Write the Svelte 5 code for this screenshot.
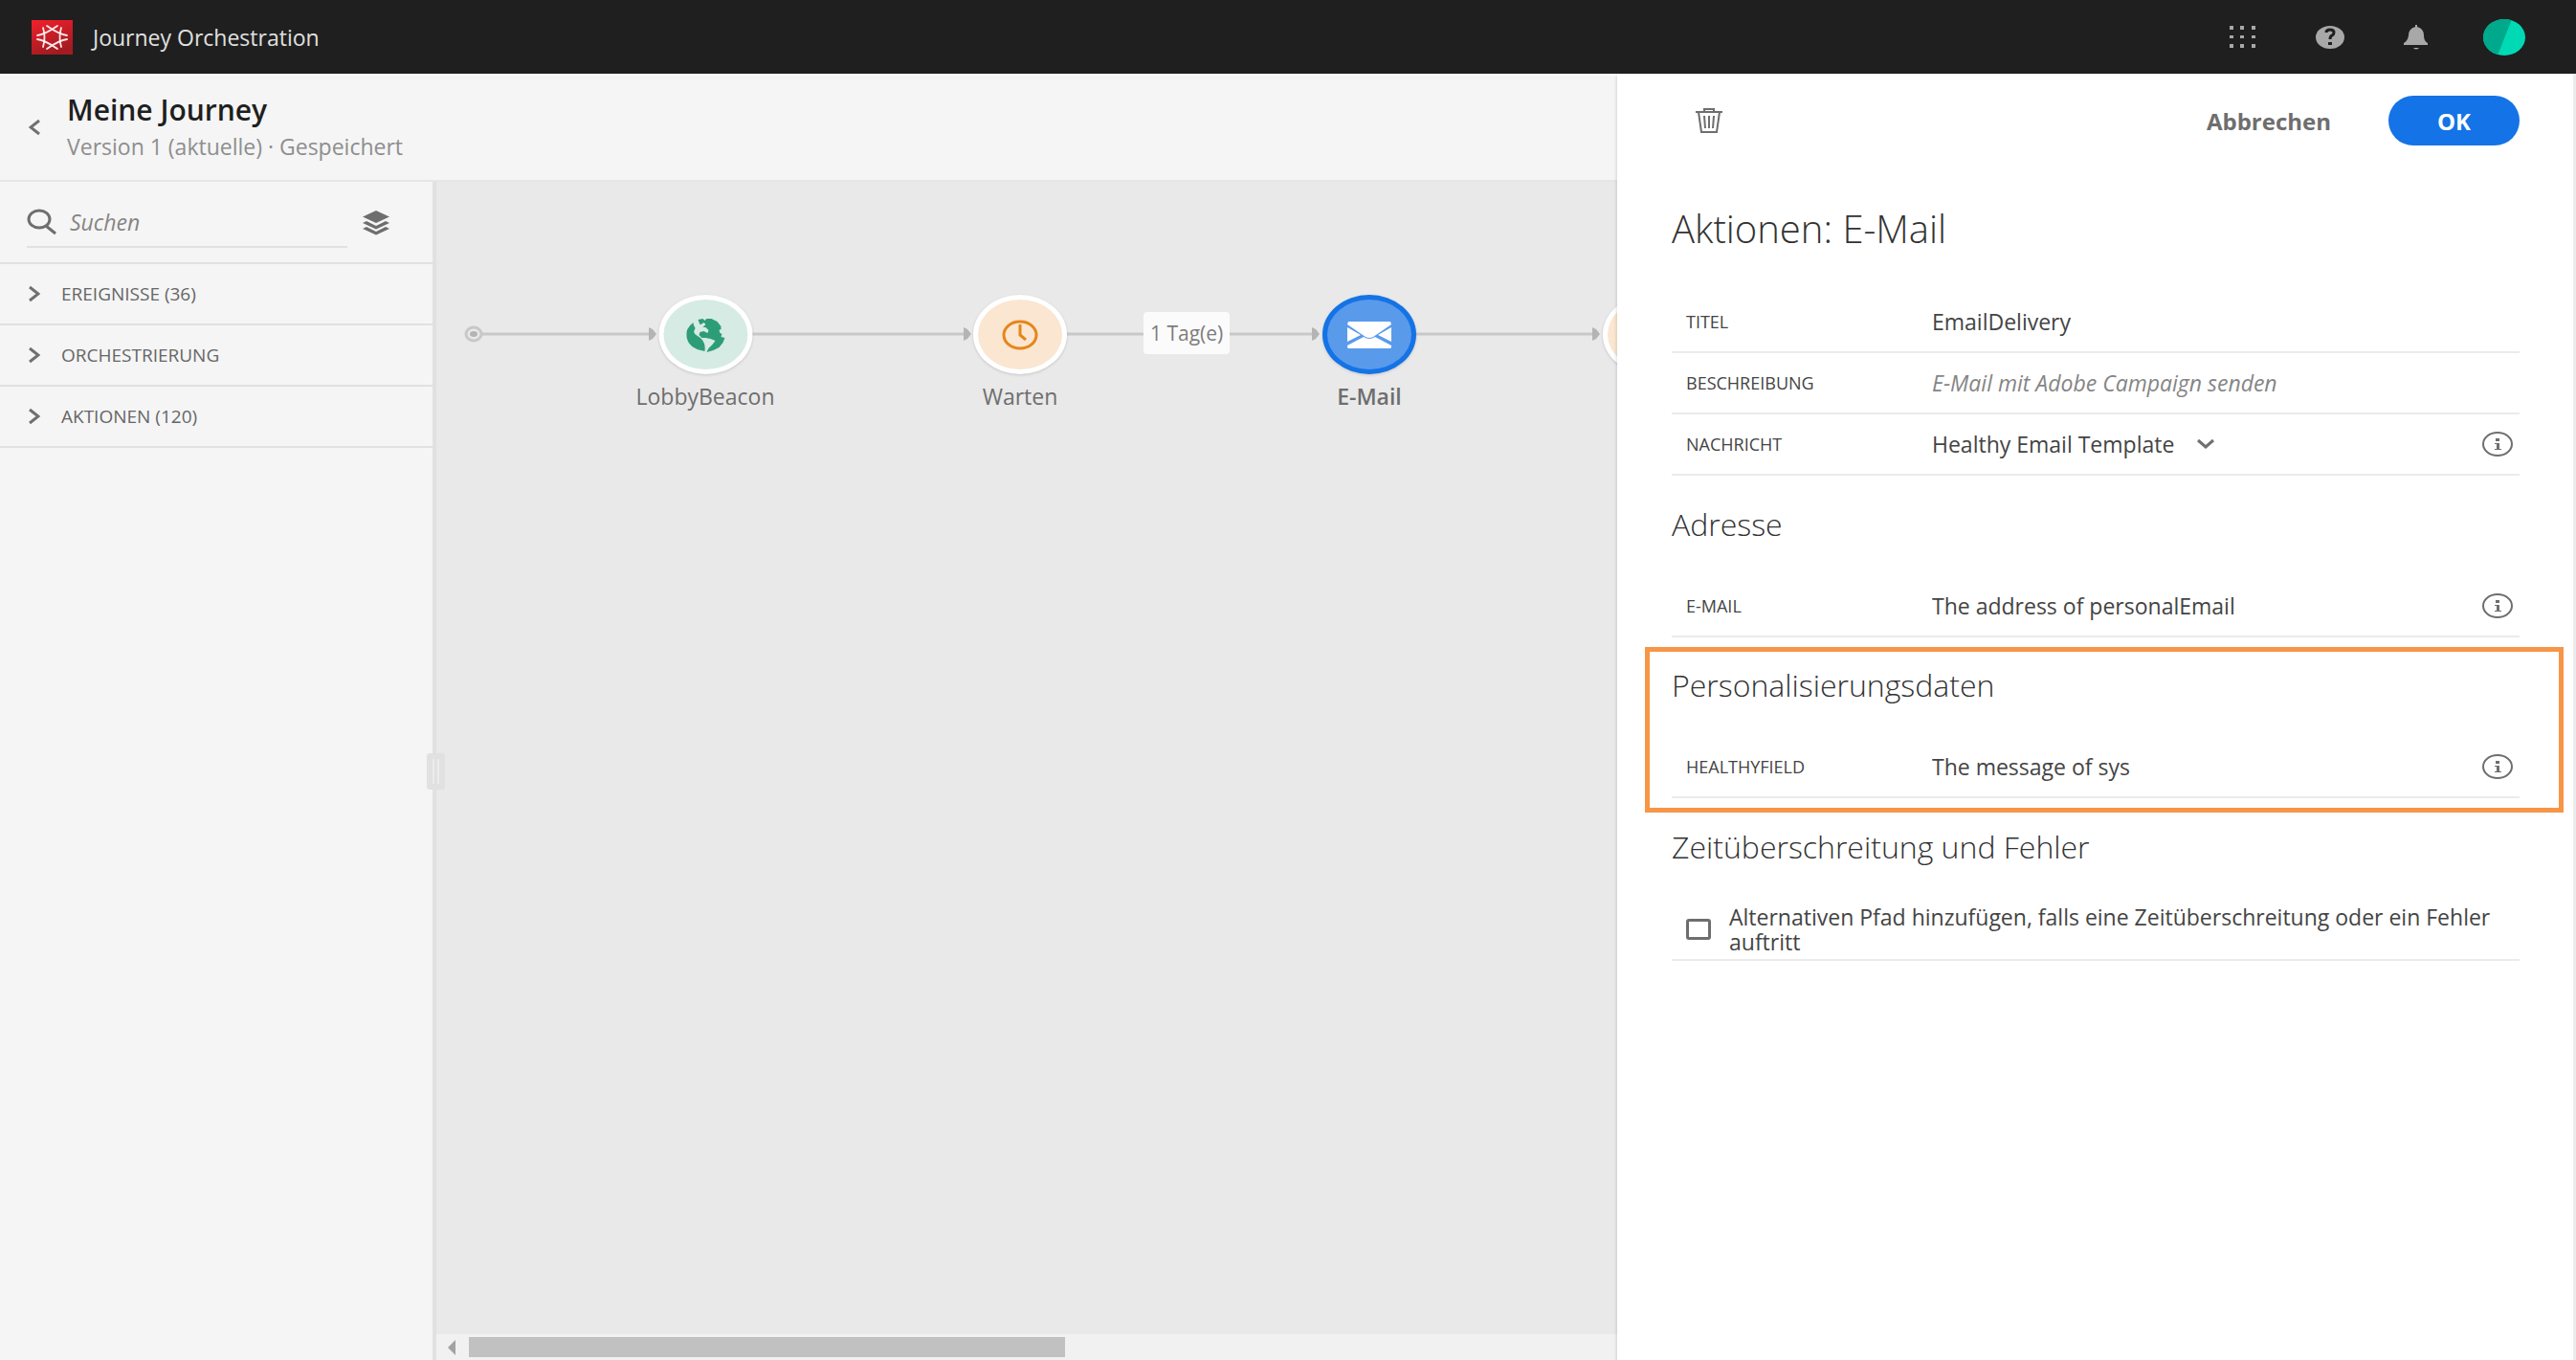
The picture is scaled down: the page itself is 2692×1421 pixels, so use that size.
<script lang="ts">
  interface Field {
    id: string
    label: string
    value?: string
    placeholder?: string
    options?: string[]
    info?: boolean
  }

  interface Section {
    title: string
    highlight?: boolean
    fields: Field[]
  }

  let searchValue: string = "";
  let alternativePath: boolean = false;

  const categories: string[] = ["EREIGNISSE (36)", "ORCHESTRIERUNG", "AKTIONEN (120)"];

  // positions on the journey canvas
  const nodes = [
    { x: 281, name: "LobbyBeacon", kind: "event" },
    { x: 610, name: "Warten", kind: "wait" },
    { x: 975, name: "E-Mail", kind: "action" },
    { x: 1268, name: "", kind: "wait" },
  ];

  const edges = [
    { from: 47, to: 230 },
    { from: 329, to: 559 },
    { from: 658, to: 923 },
    { from: 1023, to: 1216 },
  ];

  const general: Field[] = [
    { id: "title", label: "TITEL", value: "EmailDelivery" },
    { id: "description", label: "BESCHREIBUNG", value: "", placeholder: "E-Mail mit Adobe Campaign senden" },
    { id: "message", label: "NACHRICHT", options: ["Healthy Email Template"], info: true },
  ];

  const sections: Section[] = [
    {
      title: "Adresse",
      fields: [{ id: "email", label: "E-MAIL", value: "The address of personalEmail", info: true }],
    },
    {
      title: "Personalisierungsdaten",
      highlight: true,
      fields: [{ id: "healthy", label: "HEALTHYFIELD", value: "The message of sys", info: true }],
    },
  ];
</script>

{#snippet fieldRow(field: Field)}
  <div class="field">
    <label for={field.id}>{field.label}</label>
    {#if field.options}
      <div class="field-select">
        <select id={field.id}>
          {#each field.options as option}
            <option>{option}</option>
          {/each}
        </select>
        <svg width="20" height="12" viewBox="0 0 20 12"><path d="M2 2l8 7 8-7" /></svg>
      </div>
    {:else}
      <input id={field.id} type="text" value={field.value} placeholder={field.placeholder} />
    {/if}
    {#if field.info}
      <button class="info" aria-label="Info">
        <svg width="32" height="26" viewBox="0 0 32 26">
          <ellipse cx="16" cy="13" rx="15" ry="12" />
          <path class="info-glyph" d="M14 7h4v3h-4zM13 12h5v6h2v1h-7v-1h2v-5h-2z" />
        </svg>
      </button>
    {/if}
  </div>
{/snippet}

<div class="app">
  <header class="topbar">
    <svg width="44" height="36" viewBox="0 0 44 36">
      <defs>
        <linearGradient id="logo-red" x1="0" y1="0" x2="0.4" y2="1">
          <stop offset="0" stop-color="#f3202c" />
          <stop offset="1" stop-color="#a31b21" />
        </linearGradient>
      </defs>
      <rect width="43" height="36" fill="url(#logo-red)" />
      <g fill="none" stroke="#fff" stroke-opacity="0.9" stroke-width="1.800" stroke-linecap="round">
        <path d="M6 16Q14 15 27 6M37 16Q29 15 16 6" />
        <path d="M6 20Q14 21 27 30M37 20Q29 21 16 30" />
        <path d="M12 8Q15 18 12 28M31 8Q28 18 31 28" />
      </g>
    </svg>
    <span class="product">Journey Orchestration</span>
    <button aria-label="Apps">
      <svg width="28" height="24" viewBox="0 0 28 24">
        <path d="M0 0h4v4H0zM11 0h4v4h-4zM23 0h4v4h-4zM0 10h4v3H0zM11 10h4v3h-4zM23 10h4v3h-4zM0 19h4v4H0zM11 19h4v4h-4zM23 19h4v4h-4z" />
      </svg>
    </button>
    <button aria-label="Hilfe">
      <svg width="30" height="24" viewBox="0 0 30 24">
        <ellipse cx="15" cy="12" rx="15" ry="12" />
        <path d="M11 7q0-3 4-3t4 3q0 2-2 3t-2 4" fill="none" stroke="#1f1f1f" stroke-width="3" />
        <rect x="13" y="17" width="4" height="3" fill="#1f1f1f" />
      </svg>
    </button>
    <button aria-label="Benachrichtigungen">
      <svg width="26" height="26" viewBox="0 0 26 26">
        <path d="M12 0h2v2q7 2 7 9 0 6 4 8v2H0v-2q4-2 5-8 0-7 7-9zM10 24h6q-3 3-6 0z" />
      </svg>
    </button>
    <button aria-label="Profil">
      <svg width="46" height="38" viewBox="0 0 46 38">
        <defs>
          <clipPath id="avatar-clip"><ellipse cx="23" cy="19" rx="22" ry="19" /></clipPath>
        </defs>
        <g clip-path="url(#avatar-clip)">
          <rect width="46" height="38" fill="#00dab4" />
          <path d="M0 0h31L16 38H0z" fill="#00a98b" />
        </g>
      </svg>
    </button>
  </header>

  <div class="workspace">
    <main class="journey">
      <div class="journey-header">
        <a href="#journeys" aria-label="Zurück">
          <svg width="12" height="18" viewBox="0 0 12 18"><path d="M11 2L2 9l9 7" /></svg>
        </a>
        <div>
          <h1>Meine Journey</h1>
          <p>Version 1 (aktuelle) · Gespeichert</p>
        </div>
      </div>

      <div class="journey-body">
        <aside class="palette">
          <div class="palette-search">
            <label for="search">
              <svg width="32" height="28" viewBox="0 0 32 28">
                <ellipse cx="13" cy="11" rx="11" ry="9" />
                <path d="M20 18l10 8" />
              </svg>
              <input id="search" type="search" placeholder="Suchen" bind:value={searchValue} />
            </label>
            <button aria-label="Filter">
              <svg width="28" height="26" viewBox="0 0 28 26">
                <path d="M14 0l14 6.500-14 6.500L0 6.500z" />
                <path d="M0 13l4-2 10 5 10-5 4 2-14 6.500zM0 19l4-2 10 5 10-5 4 2-14 6.500z" />
              </svg>
            </button>
          </div>
          {#each categories as category}
            <button class="category">
              <svg width="12" height="18" viewBox="0 0 12 18"><path d="M1 2l9 7-9 7" /></svg>
              {category}
            </button>
          {/each}
          <span class="palette-handle"></span>
        </aside>

        <div class="canvas">
          <div class="canvas-area">
            <svg class="edges" width="1300" height="40" viewBox="0 0 1300 40">
              <ellipse cx="39" cy="20" rx="8" ry="7" />
              <ellipse class="edge-dot" cx="39" cy="20" rx="4" ry="3" />
              {#each edges as edge}
                <path d="M{edge.from} 20H{edge.to - 6}" />
                <path class="edge-tip" d="M{edge.to - 8} 13l4 2 4 5-4 5-4 2z" />
              {/each}
            </svg>
            <span class="delay">1 Tag(e)</span>
            {#each nodes as node}
              <div class="node {node.kind}" style="left: {node.x}px">
                <div class="node-icon">
                  {#if node.kind === "event"}
                    <svg width="42" height="36" viewBox="0 0 42 36">
                      <path d="M8 5Q0 11 1 19q1 13 19 16 1-6-2-11-3-4-7-6-3-2-2-5 2-2 0-4-1-2-1-4z" />
                      <path d="M13 2l5-1 2 2 2-2h5l6 3 4 5v3l-2 1 1 3 2 1-1 3 4 1-2 5-4 5-6 3-7 2 2-4 4-4 3-4-5-2-5-1-4 0-3-3 1-3 4-1 4 2 1-3-3-3-3 0 3-3-2-2-3 2-1 0z" />
                    </svg>
                  {:else if node.kind === "wait"}
                    <svg width="40" height="34" viewBox="0 0 40 34">
                      <ellipse cx="20" cy="17" rx="17" ry="14" />
                      <path d="M20 6v11l6 5" />
                    </svg>
                  {:else}
                    <svg width="46" height="28" viewBox="0 0 46 28">
                      <path d="M1 0h44l1 3-19 13q-4 2-8 0L0 3z" />
                      <path d="M0 6l14 8L0 21zM46 6L32 14l14 7z" />
                      <path d="M0 25l17-9q6 4 12 0l17 9v2l-1 1H1l-1-1z" />
                    </svg>
                  {/if}
                </div>
                <span>{node.name}</span>
              </div>
            {/each}
          </div>
          <div class="scrollbar">
            <svg width="9" height="16" viewBox="0 0 9 16"><path d="M8 0v16L0 8z" /></svg>
            <div class="scrollbar-thumb"></div>
          </div>
        </div>
      </div>
    </main>

    <section class="panel">
      <div class="panel-actions">
        <button class="delete" aria-label="Löschen">
          <svg width="30" height="28" viewBox="0 0 30 28">
            <path d="M1 5h28M10 5V2h10v3M4 5l3 21h16l3-21M10 9l1 13M15 9v13M20 9l-1 13" />
          </svg>
        </button>
        <button class="cancel">Abbrechen</button>
        <button class="ok">OK</button>
      </div>

      <h2>Aktionen: E-Mail</h2>
      {#each general as field}
        {@render fieldRow(field)}
      {/each}

      {#each sections as section}
        <div class="section" class:highlight={section.highlight}>
          <h3>{section.title}</h3>
          {#each section.fields as field}
            {@render fieldRow(field)}
          {/each}
        </div>
      {/each}

      <div class="section">
        <h3>Zeitüberschreitung und Fehler</h3>
        <label class="timeout">
          <input type="checkbox" bind:checked={alternativePath} />
          Alternativen Pfad hinzufügen, falls eine Zeitüberschreitung oder ein Fehler auftritt
        </label>
      </div>
    </section>
  </div>
</div>

<style>
  :global(body) {
    background: #f5f5f5;
  }

  .app, button, input, select {
    font-family: "Open Sans", "Noto Sans", sans-serif;
  }

  .app {
    display: flex;
    flex-direction: column;
    min-height: 100vh;
    font-size: 23px;
    line-height: 32px;
    color: #444;
  }

  .app *, .app {
    box-sizing: border-box;
  }

  button {
    padding: 0;
    border: none;
    background: none;
    cursor: pointer;
  }

  input, select {
    padding: 0;
    border: none;
    outline: none;
    background: none;
    color: inherit;
    font-size: inherit;
  }

  svg {
    display: block;
    flex-shrink: 0;
  }

  h1, h2, h3, p {
    margin: 0;
  }

  .topbar {
    display: flex;
    align-items: center;
    height: 77px;
    padding: 0 52px 0 33px;
    background: #1f1f1f;
    color: #e0e0e0;
  }

  .topbar button {
    margin-left: 62px;
    fill: #a8a8a8;
  }

  .topbar button:last-child {
    margin-left: 56px;
  }

  .product {
    flex: 1;
    margin-left: 20px;
  }

  .workspace {
    display: flex;
    flex: 1;
  }

  .journey {
    display: flex;
    flex: 1;
    flex-direction: column;
    min-width: 0;
    border-top: 2px solid #fff;
  }

  .journey-header {
    display: flex;
    align-items: center;
    gap: 28px;
    height: 111px;
    padding: 0 0 2px 30px;
    border-bottom: 2px solid #e6e6e6;
  }

  .journey-header svg, .category svg, .field-select svg {
    fill: none;
    stroke: #707070;
    stroke-width: 3;
  }

  h1 {
    color: #1f1f1f;
    font-size: 30px;
    font-weight: 600;
    line-height: 40px;
  }

  .journey-header p {
    color: #8e8e8e;
    line-height: 36px;
  }

  .journey-body {
    display: flex;
    flex: 1;
  }

  .palette {
    position: relative;
    width: 456px;
    border-right: 4px solid #e1e1e1;
  }

  .palette-search {
    display: flex;
    align-items: center;
    gap: 16px;
    height: 86px;
    padding: 2px 45px 0 28px;
    border-bottom: 2px solid #e1e1e1;
  }

  .palette-search label {
    display: flex;
    flex: 1;
    align-items: center;
    gap: 13px;
    height: 52px;
    border-bottom: 2px solid #e1e1e1;
  }

  .palette-search label svg {
    fill: none;
    stroke: #6e6e6e;
    stroke-width: 3;
  }

  .palette-search input {
    flex: 1;
    min-width: 0;
  }

  .palette-search button {
    fill: #6e6e6e;
  }

  input::placeholder {
    color: #858585;
    font-style: italic;
  }

  .category {
    display: flex;
    align-items: center;
    gap: 22px;
    width: 100%;
    height: 64px;
    padding-left: 30px;
    border-bottom: 2px solid #e1e1e1;
    color: #666;
    font-size: 19px;
  }

  .palette-handle {
    position: absolute;
    top: calc(50% - 19px);
    right: -13px;
    width: 19px;
    height: 38px;
    border: 6px solid #e1e1e1;
    border-radius: 3px;
    background: linear-gradient(90deg, #ececec 2px, #e1e1e1 2px 5px, #ececec 5px);
    z-index: 1;
  }

  .canvas {
    display: flex;
    flex: 1;
    flex-direction: column;
    min-width: 0;
    background: #e9e9e9;
  }

  .canvas-area {
    position: relative;
    flex: 1;
    overflow: hidden;
  }

  .edges {
    position: absolute;
    top: 139px;
    left: 0;
    fill: none;
    stroke: #c8c8c8;
    stroke-width: 3;
  }

  .edges .edge-dot, .edges .edge-tip {
    fill: #b4b4b4;
    stroke: none;
  }

  .delay {
    position: absolute;
    top: 136px;
    left: 739px;
    padding: 0 7px;
    border-radius: 4px;
    background: #fbfbfb;
    color: #7d7d7d;
    font-size: 21px;
    line-height: 44px;
  }

  .node {
    position: absolute;
    top: 118px;
    display: flex;
    flex-direction: column;
    align-items: center;
    gap: 7px;
    color: #6e6e6e;
    transform: translateX(-50%);
  }

  .node-icon {
    display: flex;
    align-items: center;
    justify-content: center;
    width: 98px;
    height: 83px;
    border: 5px solid #fff;
    border-radius: 50%;
    box-shadow: 0 1px 3px rgba(0, 0, 0, 0.15);
  }

  .event .node-icon {
    background: #d6ebe3;
    fill: #2d9d78;
  }

  .wait .node-icon {
    background: #fae6d1;
    fill: none;
    stroke: #e68619;
    stroke-width: 3;
  }

  .action .node-icon {
    border-color: #1473e6;
    background: #5a9aeb;
    fill: #fff;
  }

  .action span {
    font-weight: 600;
  }

  .scrollbar {
    display: flex;
    align-items: center;
    gap: 13px;
    height: 27px;
    padding-left: 12px;
    background: #f1f1f1;
  }

  .scrollbar svg {
    fill: #a3a3a3;
  }

  .scrollbar-thumb {
    width: 51%;
    height: 21px;
    background: #c1c1c1;
  }

  .panel {
    width: 1002px;
    padding: 0 56px 0 57px;
    border-right: 3px solid #ececec;
    background: #fff;
    box-shadow: 0 2px 4px rgba(0, 0, 0, 0.2);
    z-index: 1;
  }

  .panel-actions {
    display: flex;
    align-items: center;
    height: 98px;
  }

  .delete {
    margin: 0 auto 0 24px;
    fill: none;
    stroke: #6e6e6e;
    stroke-width: 2;
  }

  .cancel, .ok {
    color: #6e6e6e;
    font-size: 24px;
    font-weight: 700;
  }

  .ok {
    width: 137px;
    height: 52px;
    margin-left: 60px;
    border-radius: 26px;
    background: #1473e6;
    color: #fff;
  }

  h2 {
    padding: 36px 0 38px;
    color: #323232;
    font-size: 40px;
    font-weight: 300;
    line-height: 56px;
  }

  h3 {
    height: 105px;
    padding-top: 31px;
    color: #323232;
    font-size: 32px;
    font-weight: 300;
    line-height: 40px;
  }

  .field {
    display: flex;
    align-items: center;
    height: 64px;
    padding: 0 7px 0 15px;
    border-bottom: 2px solid #ebebeb;
  }

  .field label {
    width: 257px;
    font-size: 18px;
  }

  .field > input {
    flex: 1;
  }

  .field-select {
    display: flex;
    flex: 1;
    align-items: center;
    gap: 22px;
  }

  .field-select select {
    appearance: none;
  }

  .info svg {
    fill: none;
    stroke: #6e6e6e;
    stroke-width: 2;
  }

  .info .info-glyph {
    fill: #6e6e6e;
    stroke: none;
  }

  .highlight {
    margin: 10px -46px -15px -28px;
    padding: 0 41px 10px 23px;
    border: 5px solid #f79646;
  }

  .highlight h3 {
    height: 89px;
    padding-top: 15px;
  }

  .timeout {
    display: flex;
    align-items: center;
    gap: 19px;
    height: 65px;
    padding: 0 16px 0 15px;
    border-bottom: 2px solid #ebebeb;
    line-height: 26px;
  }

  .timeout input {
    flex-shrink: 0;
    appearance: none;
    width: 26px;
    height: 22px;
    margin: 0;
    border: 3px solid #6e6e6e;
    border-radius: 3px;
  }
</style>
